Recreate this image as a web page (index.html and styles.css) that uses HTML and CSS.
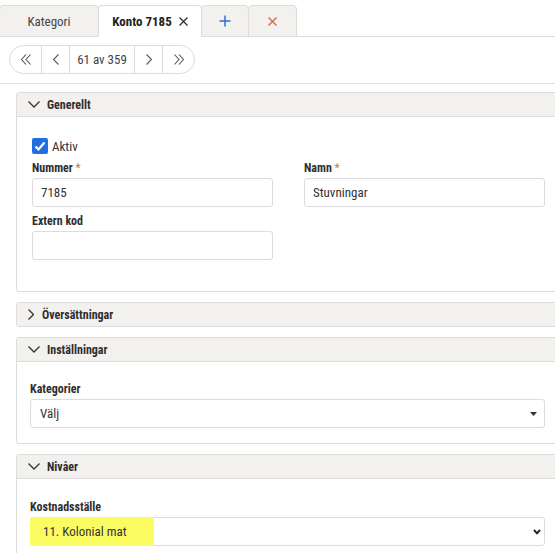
FILE: index.html
```html
<!DOCTYPE html>
<html lang="sv">
<head>
<meta charset="utf-8">
<title>Konto 7185</title>
<link rel="stylesheet" href="styles.css">
</head>
<body>
<div class="tabs">
  <div class="tab tab-w1">Kategori</div>
  <div class="tab tab-w2 tab-active">Konto 7185
    <svg class="ico" width="9" height="9" viewBox="0 0 9 9"><path d="M0.5 0.5 L8.5 8.5 M8.5 0.5 L0.5 8.5" stroke="#333" stroke-width="1.3" fill="none"/></svg>
  </div>
  <div class="tab tab-w3">
    <svg class="ico" width="12" height="12" viewBox="0 0 12 12"><path d="M6 0.5 V11.5 M0.5 6 H11.5" stroke="#2f6fd0" stroke-width="1.5" fill="none"/></svg>
  </div>
  <div class="tab tab-w4">
    <svg class="ico" width="9" height="9" viewBox="0 0 9 9"><path d="M0.5 0.5 L8.5 8.5 M8.5 0.5 L0.5 8.5" stroke="#d8694a" stroke-width="1.4" fill="none"/></svg>
  </div>
  <div class="tab-fill"></div>
</div>

<div class="toolbar">
  <div class="pager">
    <div class="pg pg-1"><svg width="10" height="11" viewBox="0 0 10 11"><path d="M5 0.5 L0.5 5.5 L5 10.5 M9.5 0.5 L5 5.5 L9.5 10.5" stroke="#555" stroke-width="1.1" fill="none"/></svg></div>
    <div class="pg pg-2"><svg width="6" height="11" viewBox="0 0 6 11"><path d="M5.5 0.5 L0.5 5.5 L5.5 10.5" stroke="#555" stroke-width="1.1" fill="none"/></svg></div>
    <div class="pg pg-3">61 av 359</div>
    <div class="pg pg-2"><svg width="6" height="11" viewBox="0 0 6 11"><path d="M0.5 0.5 L5.5 5.5 L0.5 10.5" stroke="#555" stroke-width="1.1" fill="none"/></svg></div>
    <div class="pg pg-1"><svg width="10" height="11" viewBox="0 0 10 11"><path d="M0.5 0.5 L5 5.5 L0.5 10.5 M5 0.5 L9.5 5.5 L5 10.5" stroke="#555" stroke-width="1.1" fill="none"/></svg></div>
  </div>
</div>

<div class="main">
  <section class="panel panel-open">
    <div class="panel-head">
      <svg class="chev-down" width="12" height="7" viewBox="0 0 12 7"><path d="M0.5 0.5 L6 6 L11.5 0.5" stroke="#333" stroke-width="1.3" fill="none"/></svg>
      Generellt
    </div>
    <div class="panel-body body-gen">
      <div class="grid">
        <div class="check-row">
          <span class="checkbox"><svg width="16" height="16" viewBox="0 0 16 16"><path d="M3.5 8.5 L6.5 11.5 L12.5 4.5" stroke="#fff" stroke-width="2.2" fill="none"/></svg></span>
          <span>Aktiv</span>
        </div>
        <div class="field">
          <label class="lbl">Nummer <span class="req">*</span></label>
          <div class="input">7185</div>
        </div>
        <div class="field">
          <label class="lbl">Namn <span class="req">*</span></label>
          <div class="input">Stuvningar</div>
        </div>
        <div class="field">
          <label class="lbl">Extern kod</label>
          <div class="input"></div>
        </div>
      </div>
    </div>
  </section>

  <section class="panel">
    <div class="panel-head">
      <svg class="chev-right" width="6" height="11" viewBox="0 0 6 11"><path d="M0.5 0.5 L5.5 5.5 L0.5 10.5" stroke="#333" stroke-width="1.3" fill="none"/></svg>
      Översättningar
    </div>
  </section>

  <section class="panel panel-open">
    <div class="panel-head">
      <svg class="chev-down" width="12" height="7" viewBox="0 0 12 7"><path d="M0.5 0.5 L6 6 L11.5 0.5" stroke="#333" stroke-width="1.3" fill="none"/></svg>
      Inställningar
    </div>
    <div class="panel-body body-set">
      <label class="lbl">Kategorier</label>
      <div class="select select-cat">
        <span>Välj</span>
        <svg width="7" height="4" viewBox="0 0 7 4"><polygon points="0,0 7,0 3.5,4" fill="#333"/></svg>
      </div>
    </div>
  </section>

  <section class="panel panel-open">
    <div class="panel-head">
      <svg class="chev-down" width="12" height="7" viewBox="0 0 12 7"><path d="M0.5 0.5 L6 6 L11.5 0.5" stroke="#333" stroke-width="1.3" fill="none"/></svg>
      Nivåer
    </div>
    <div class="panel-body body-niv">
      <label class="lbl">Kostnadsställe</label>
      <div class="select select-kst">
        <span class="hl">11. Kolonial mat</span>
        <svg width="8" height="6" viewBox="0 0 8 6"><path d="M1 1 L4 4.3 L7 1" stroke="#222" stroke-width="2" fill="none"/></svg>
      </div>
    </div>
  </section>
</div>
</body>
</html>
```

FILE: styles.css
```css
html, body {
  margin: 0;
  background: #fff;
}
body {
  font-family: "Roboto Condensed", "Roboto", "Liberation Sans", sans-serif;
  font-stretch: condensed;
  font-size: 13px;
  color: #333;
  overflow: hidden;
}

/* Tabs */
.tabs {
  display: flex;
  padding-top: 5px;
}
.tab {
  box-sizing: border-box;
  height: 32px;
  margin-left: -1px;
  border: 1px solid #dcdcdc;
  border-radius: 4px 4px 0 0;
  background: #f3f1ee;
  display: flex;
  align-items: center;
  justify-content: center;
  gap: 7px;
  color: #444;
  flex: none;
}
.tab-active {
  background: #fff;
  border-bottom-color: #fff;
  font-weight: bold;
  color: #222;
}
.tab-w1 { width: 100px; }
.tab-w2 { width: 104px; }
.tab-w3 { width: 48px; }
.tab-w4 { width: 49px; }
.tab-fill {
  flex: 1;
  border-bottom: 1px solid #dcdcdc;
}
.ico { display: block; }

/* Toolbar / pager */
.toolbar {
  padding: 8px 0 9px 9px;
  border-bottom: 1px solid #e0e0e0;
}
.pager {
  display: inline-flex;
  box-sizing: border-box;
  height: 29px;
  border: 1px solid #dcdcdc;
  border-radius: 15px;
}
.pg {
  box-sizing: border-box;
  display: flex;
  align-items: center;
  justify-content: center;
  border-left: 1px solid #dcdcdc;
  color: #444;
}
.pg:first-child { border-left: 0; }
.pg svg { display: block; }
.pg-1 { width: 32px; }
.pg:first-child.pg-1 { width: 31px; }
.pg-2 { width: 28px; }
.pg-3 { width: 65px; }

/* Panels */
.main {
  padding: 8px 0 0 16px;
}
.panel {
  box-sizing: border-box;
  width: 545px;
  border: 1px solid #dcdcdc;
  border-radius: 3px;
  margin-bottom: 10px;
}
.panel-head {
  height: 23px;
  display: flex;
  align-items: center;
  padding-left: 11px;
  background: #f3f1ee;
  border-radius: 3px 3px 0 0;
  font-size: 12px;
  font-weight: bold;
  color: #2e2e2e;
}
.panel-open .panel-head {
  border-bottom: 1px solid #dcdcdc;
}
.chev-down { display: block; margin-right: 7px; }
.chev-right { display: block; margin-right: 8px; }

.body-gen { padding: 21px 15px 31px 15px; }
.body-set { padding: 20px 15px 15px 13px; }
.body-niv { padding: 21px 15px 15px 13px; }

.grid {
  display: grid;
  grid-template-columns: 241px 241px;
  column-gap: 31px;
  row-gap: 7px;
}
.check-row {
  grid-column: 1 / -1;
  display: flex;
  align-items: center;
  gap: 4px;
  height: 16px;
}
.checkbox {
  width: 16px;
  height: 16px;
  border-radius: 2px;
  background: #1f6fe2;
  display: block;
}
.checkbox svg { display: block; }

.lbl {
  display: block;
  font-size: 12px;
  font-weight: bold;
  line-height: 14px;
  margin-bottom: 3px;
  color: #2e2e2e;
}
.req { color: #c7803e; font-weight: normal; }

.input {
  box-sizing: border-box;
  height: 29px;
  border: 1px solid #dcdcdc;
  border-radius: 3px;
  padding: 0 8px;
  display: flex;
  align-items: center;
}

.select {
  box-sizing: border-box;
  height: 29px;
  border: 1px solid #dcdcdc;
  border-radius: 3px;
  display: flex;
  align-items: center;
  justify-content: space-between;
}
.select svg { display: block; }
.select-cat { padding: 0 7px 0 9px; }
.select-kst { padding: 0 3px 0 0; }
.hl {
  box-sizing: border-box;
  align-self: stretch;
  width: 124px;
  margin: -1px 0 -1px -1px;
  padding-left: 13px;
  display: flex;
  align-items: center;
  background: #fbfb62;
  border-radius: 3px 0 0 3px;
}
```
